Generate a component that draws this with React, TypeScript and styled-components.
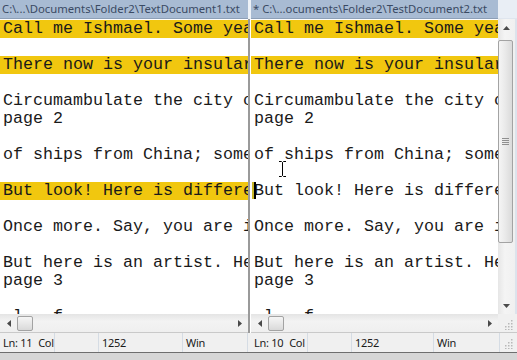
import React from 'react';
import styled, { createGlobalStyle } from 'styled-components';

const Global = createGlobalStyle`
  html, body { margin: 0; padding: 0; background: #f0f0f0; }
  body { width: 517px; height: 360px; overflow: hidden; font-family: "Noto Sans", "DejaVu Sans", sans-serif; }
`;

const Window = styled.div`
  width: 517px;
  height: 360px;
  display: flex;
  flex-direction: column;
  background: #f0f0f0;
  position: relative;
  overflow: hidden;
`;

const Panes = styled.div`
  display: flex;
  height: 333px;
`;

const Pane = styled.div<{ $w: number }>`
  width: ${p => p.$w}px;
  display: flex;
  flex-direction: column;
  flex: none;
`;

const TopRow = styled.div`
  display: flex;
  height: 19px;
  flex: none;
`;

const TitleBar = styled.div`
  flex: 1;
  min-width: 0;
  height: 18px;
  border-bottom: 1px solid #8d9fb7;
  background: #a8bbd3;
  color: #3a4a63;
  font-size: 11.3px;
  line-height: 18px;
  padding-left: 2px;
  white-space: nowrap;
  overflow: hidden;
`;

const TitleCorner = styled.div`
  width: 19px;
  background: #e9eef5;
  border-bottom: 1px solid #dfe5ee;
`;

const Body = styled.div`
  flex: 1;
  display: flex;
  min-height: 0;
`;

const Editor = styled.div`
  flex: 1;
  min-width: 0;
  background: #ffffff;
  overflow: hidden;
  padding-top: 1px;
  position: relative;
`;

const Line = styled.div<{ $hl?: boolean }>`
  height: 18px;
  line-height: 18px;
  font-family: "Liberation Mono", "Courier New", monospace;
  font-size: 16.67px;
  color: #1a1a1a;
  white-space: pre;
  padding-left: 3px;
  background: ${p => (p.$hl ? '#f1c70f' : 'transparent')};
  position: relative;
`;

const Caret = styled.span`
  position: absolute;
  left: 1px;
  top: 0;
  width: 2px;
  height: 17px;
  background: #c9b82a;
  &::after {
    content: '';
    position: absolute;
    left: 2px;
    top: 0;
    width: 2px;
    height: 17px;
    background: #000;
  }
`;

const Splitter = styled.div`
  width: 3px;
  flex: none;
  display: flex;
  flex-direction: column;
`;

const SplitTop = styled.div`
  height: 19px;
  background: #eef2f7;
`;

const SplitBody = styled.div`
  flex: 1;
  background: #ffffff;
  border-left: 2px solid #9a9a9a;
`;

const VScroll = styled.div`
  width: 17px;
  flex: none;
  display: flex;
  flex-direction: column;
  background: linear-gradient(to right, #e6e6e6, #f4f4f4 40%, #f0f0f0);
`;

const Edge = styled.div`
  width: 2px;
  flex: none;
  background: #dce3ec;
`;

const ArrowBtn = styled.div`
  width: 17px;
  height: 17px;
  flex: none;
  display: flex;
  align-items: center;
  justify-content: center;
`;

const VTrack = styled.div`
  flex: 1;
  padding: 4px 1px 0 0;
`;

const VThumb = styled.div`
  height: 203px;
  width: 15px;
  box-sizing: border-box;
  border: 1px solid #a3a3a3;
  border-radius: 2px;
  background: linear-gradient(to right, #f5f5f5, #e9e9e9 50%, #dadada);
  display: flex;
  align-items: center;
  justify-content: center;
`;

const HScrollRow = styled.div`
  height: 18px;
  flex: none;
  display: flex;
  border-bottom: 1px solid #c9c9c9;
`;

const HScroll = styled.div`
  flex: 1;
  min-width: 0;
  display: flex;
  align-items: center;
  background: linear-gradient(to bottom, #e4e4e4, #f3f3f3 40%, #efefef);
`;

const HTrack = styled.div`
  flex: 1;
  display: flex;
  align-items: center;
`;

const HThumb = styled.div`
  width: 16px;
  height: 15px;
  box-sizing: border-box;
  border: 1px solid #a3a3a3;
  border-radius: 2px;
  background: linear-gradient(to bottom, #f5f5f5, #e8e8e8 50%, #d9d9d9);
`;

const GripCorner = styled.div`
  width: 19px;
  display: flex;
  align-items: flex-end;
  justify-content: flex-end;
  background: #f0f0f0;
  padding: 0 4px 2px 0;
  box-sizing: border-box;
`;

const StatusRow = styled.div`
  display: flex;
  height: 19px;
  flex: none;
  background: #f0f0f0;
`;

const StatusBar = styled.div<{ $w: number }>`
  width: ${p => p.$w}px;
  flex: none;
  display: flex;
  align-items: center;
  font-size: 11px;
  letter-spacing: -0.3px;
  color: #1a1a1a;
`;

const Field = styled.div<{ $w?: number }>`
  width: ${p => (p.$w ? `${p.$w}px` : 'auto')};
  flex: ${p => (p.$w ? 'none' : '1')};
  display: flex;
  gap: 6px;
  height: 19px;
  line-height: 19px;
  padding-left: 3px;
  box-sizing: border-box;
  border-right: 1px solid #d5dce4;
  white-space: nowrap;
  overflow: hidden;
`;

const StatusGap = styled.div`
  width: 3px;
  flex: none;
`;

const StatusGrip = styled.div`
  width: 17px;
  display: flex;
  align-items: flex-end;
  justify-content: flex-end;
  padding: 0 4px 3px 0;
  box-sizing: border-box;
  height: 19px;
`;

const BottomEdge = styled.div`
  flex: 1;
  border-top: 1px solid #6e6e6e;
  background: #d6d6d6;
`;

const Cursor = styled.svg`
  position: absolute;
  left: 278px;
  top: 160px;
`;

const Tri = ({ dir }: { dir: 'l' | 'r' | 'u' | 'd' }) => {
  const pts = {
    l: '5,1 1,4.5 5,8',
    r: '1,1 5,4.5 1,8',
    u: '1,5 4.5,1 8,5',
    d: '1,1 4.5,5 8,1',
  }[dir];
  const horiz = dir === 'l' || dir === 'r';
  return (
    <svg width={horiz ? 6 : 9} height={horiz ? 9 : 6}>
      <polygon points={pts} fill="#4a4a4a" />
    </svg>
  );
};

const Grip = () => (
  <svg width="10" height="10">
    {[
      [8, 0], [8, 3], [5, 3], [8, 6], [5, 6], [2, 6], [8, 9], [5, 9], [2, 9],
    ].map(([x, y], i) => (
      <rect key={i} x={x} y={y} width="1.5" height="1.5" fill="#b8b8b8" />
    ))}
  </svg>
);

const GripLines = () => (
  <svg width="8" height="8">
    {[0, 2, 4, 6].map(y => (
      <rect key={y} x="0" y={y} width="7" height="1" fill="#8f8f8f" />
    ))}
  </svg>
);

type L = { t: string; hl?: boolean; caret?: boolean };

const leftLines: L[] = [
  { t: 'Call me Ishmael. Some years ago--never mind how long', hl: true },
  { t: '' },
  { t: 'There now is your insular city of the Manhattoes', hl: true },
  { t: '' },
  { t: 'Circumambulate the city of a dreamy Sabbath afternoon.' },
  { t: 'page 2' },
  { t: '' },
  { t: 'of ships from China; some high aloft in the rigging' },
  { t: '' },
  { t: 'But look! Here is different crowds, pacing straight', hl: true },
  { t: '' },
  { t: 'Once more. Say, you are in the country; in some high land' },
  { t: '' },
  { t: 'But here is an artist. He desires to paint you' },
  { t: 'page 3' },
  { t: '' },
  { t: ' l   f' },
];

const rightLines: L[] = leftLines.map((l, i) =>
  i === 9 ? { t: l.t, caret: true } : l
);

const EditorPane = ({ lines }: { lines: L[] }) => (
  <Editor>
    {lines.map((l, i) => (
      <Line key={i} $hl={l.hl}>
        {l.caret && <Caret />}
        {l.t || ' '}
      </Line>
    ))}
  </Editor>
);

const Status = ({ w, ln, first }: { w: number; ln: string; first: number }) => (
  <>
    <Field $w={first}>
      <span>{`Ln: ${ln}`}</span>
      <span>Col</span>
    </Field>
    <Field $w={44} />
    <Field $w={w}>1252</Field>
  </>
);

export default function App() {
  return (
    <Window>
      <Global />
      <Panes>
        <Pane $w={248}>
          <TopRow>
            <TitleBar>C:\...\Documents\Folder2\TextDocument1.txt</TitleBar>
          </TopRow>
          <Body>
            <EditorPane lines={leftLines} />
          </Body>
          <HScrollRow>
            <HScroll>
              <ArrowBtn><Tri dir="l" /></ArrowBtn>
              <HTrack><HThumb /></HTrack>
              <ArrowBtn><Tri dir="r" /></ArrowBtn>
            </HScroll>
          </HScrollRow>
        </Pane>
        <Splitter>
          <SplitTop />
          <SplitBody />
        </Splitter>
        <Pane $w={266}>
          <TopRow>
            <TitleBar>* C:\...ocuments\Folder2\TestDocument2.txt</TitleBar>
            <TitleCorner />
          </TopRow>
          <Body>
            <EditorPane lines={rightLines} />
            <VScroll>
              <ArrowBtn><Tri dir="u" /></ArrowBtn>
              <VTrack>
                <VThumb><GripLines /></VThumb>
              </VTrack>
              <ArrowBtn><Tri dir="d" /></ArrowBtn>
            </VScroll>
            <Edge />
          </Body>
          <HScrollRow>
            <HScroll>
              <ArrowBtn><Tri dir="l" /></ArrowBtn>
              <HTrack><HThumb /></HTrack>
              <ArrowBtn><Tri dir="r" /></ArrowBtn>
            </HScroll>
            <GripCorner><Grip /></GripCorner>
          </HScrollRow>
        </Pane>
      </Panes>
      <StatusRow>
        <StatusBar $w={248}>
          <Status ln="11" first={55} w={84} />
          <Field>Win</Field>
        </StatusBar>
        <StatusGap />
        <StatusBar $w={266}>
          <Status ln="10" first={57} w={82} />
          <Field>Win</Field>
          <StatusGrip><Grip /></StatusGrip>
        </StatusBar>
      </StatusRow>
      <BottomEdge />
      <Cursor width="9" height="18" viewBox="0 0 9 18">
        <path d="M1 1.5h2.5l1 1 1-1H8M4.5 2.5v13M1 16.5h2.5l1-1 1 1H8" stroke="#000" strokeWidth="1" fill="none" />
      </Cursor>
    </Window>
  );
}
